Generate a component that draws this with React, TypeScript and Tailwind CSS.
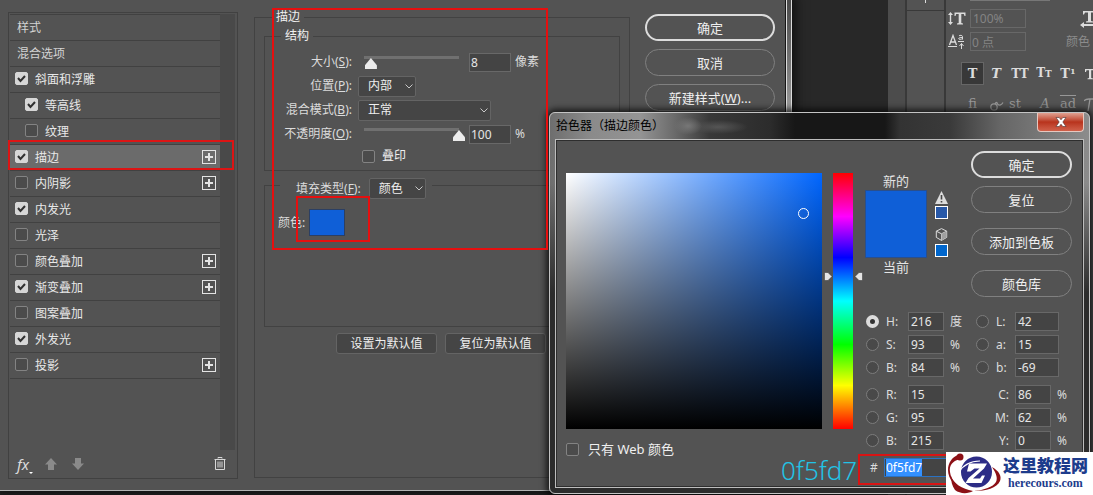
import React from "react";

const EFFECTS = [
  { name: "斜面和浮雕", checked: true },
  { name: "等高线", checked: true, sub: true },
  { name: "纹理", checked: false, sub: true },
  { name: "描边", checked: true, plus: true, active: true },
  { name: "内阴影", checked: false, plus: true },
  { name: "内发光", checked: true },
  { name: "光泽", checked: false },
  { name: "颜色叠加", checked: false, plus: true },
  { name: "渐变叠加", checked: true, plus: true },
  { name: "图案叠加", checked: false },
  { name: "外发光", checked: true },
  { name: "投影", checked: false, plus: true },
];

const TrashIcon = (props: React.SVGProps<SVGSVGElement>) => (
  <svg {...props} width="12" height="13" viewBox="0 0 12 13" fill="none" stroke="#d8d8d8">
    <path d="M4 1.5V.5h4v1M.5 2.5h11M1.500 3v9.500h9V3M4 4.500v6M6 4.500v6M8 4.500v6" />
  </svg>
);

const ArrowIcon = ({ down }: { down?: boolean }) => (
  <svg width="12" height="12" viewBox="0 0 12 12" fill="#8a8a8a" className={down ? "rotate-180" : ""}>
    <path d="M6 0l6 6.500H9V12H3V6.500H0z" />
  </svg>
);

const PlusIcon = () => (
  <svg width="14" height="14" viewBox="0 0 14 14" fill="none" stroke="#e4e4e4">
    <rect x=".5" y=".5" width="13" height="13" />
    <path d="M7 3v8M3 7h8" strokeWidth="2" />
  </svg>
);

const WarningIcon = () => (
  <svg width="13" height="13" viewBox="0 0 13 13">
    <path d="M6.500 0L13 13H0z" fill="#dcdcdc" />
    <path d="M6.500 4v4.500M6.500 10v1.500" stroke="#444" strokeWidth="1.600" />
  </svg>
);

const CubeIcon = () => (
  <svg width="13" height="13" viewBox="0 0 13 13" fill="none" stroke="#dcdcdc" strokeLinejoin="round">
    <path d="M6.500.6l5.200 2.600v6.200L6.500 12.400 1.300 9.400V3.200z" />
    <path d="M1.300 3.200l5.200 2.600 5.200-2.600M6.500 5.800v6.600" />
    <path d="M6.500 6l5-2.500v5.800l-5 2.900z" fill="#a0a0a0" stroke="none" />
  </svg>
);

const HeightIcon = () => (
  <svg width="18" height="16" viewBox="0 0 18 16" fill="#dcdcdc" className="shrink-0">
    <path d="M2.500 1L5 4H3.200v7H5l-2.500 3L0 11h1.800V4H0z" />
    <path d="M6.500 1.500H17.500V5H16.500L15.800 3H13.300V12L15 12.500V13.500H9V12.500L10.700 12V3H8.200L7.500 5H6.500z" />
  </svg>
);

const BaselineIcon = () => (
  <svg width="18" height="16" viewBox="0 0 18 16" fill="none" stroke="#dcdcdc" className="shrink-0">
    <path d="M1.500 11L5 1.500 8.500 11M2.800 8h4.500" strokeWidth="1.300" />
    <path d="M0 12.500h9M10 7.500h6M11 1.800c1-.8 3.500-.6 3.500.8v3M14.500 3.500c-2 0-4 .2-3.800 1.300.3 1 2.800.8 3.800-.5" />
    <path d="M13.500 15V9.500M11.500 12l2-2.500 2 2.500" />
  </svg>
);

const WidthIcon = () => (
  <svg width="20" height="18" viewBox="0 0 20 18" fill="#dcdcdc">
    <path d="M3 1H15V4.500H14L13.300 2.500H11V11L13 11.500V12.500H6V11.500L8 11V2.500H5L4 4.500H3z" />
    <path d="M0 15l4-3v2h14v2H4v2z" />
  </svg>
);

const SubscriptIcon = () => (
  <svg width="14" height="14" viewBox="0 0 14 14" fill="#dcdcdc">
    <path d="M0 2H10V5H9L8.500 3.200H6.200V11L8 11.500V12.300H2.500V11.500L4 11V3.200H1.500L1 5H0z" />
  </svg>
);

const SwashIcon = () => (
  <svg width="14" height="16" viewBox="0 0 14 16" fill="none" stroke="#979797" strokeWidth="1.300">
    <circle cx="4" cy="11" r="3.200" />
    <path d="M5 8c1-2 2-2 2.500 0 2 2 4 1 5.500-1.500" />
  </svg>
);

const TitlingIcon = () => (
  <svg width="14" height="16" viewBox="0 0 14 16" fill="none" stroke="#979797" strokeWidth="1.300">
    <path d="M0 5c1-2 3-2 5-2h7M6 3L4 15" />
  </svg>
);

const SiteLogo = () => (
  <svg width="57" height="43" viewBox="0 0 57 43" className="shrink-0">
    <path d="M14 7C6 9 3 14 4 20c1 8 7 14 14 18-9-3-16-11-16-20C2 11 6 5 12 3z" fill="#8c1016" />
    <path d="M5 24c2 7 11 13 22 15-5 3-13 3-18-1-3-4-4-9-4-14z" fill="#8c1016" />
    <circle cx="14" cy="5" r="3.500" fill="#8c1016" />
    <circle cx="30.500" cy="20" r="15.500" fill="#2c2c86" />
    <path d="M12 21c5-8 13-12 22-12" stroke="#fff" strokeWidth="1.200" fill="none" />
    <path d="M23 11.500h18l-3 5-11 10h7l2-3h3l-3.500 7.500H19.500l3-5 11-9.500h-5l-4 3h-3.500z" fill="#fff" />
    <path d="M46 15c7 4 10 9 8 14-3 7-14 10-26 10 10-1 19-4 22-9 2-4 0-9-4-15z" fill="#8c1016" />
  </svg>
);

const CHECK =
  "size-[13px] shrink-0 appearance-none rounded-[2px] border border-[#838383] bg-[#4b4b4b] checked:border-[#d6d6d6] checked:bg-[#d6d6d6]";
const FIELD = "h-[19px] border border-[#686868] bg-[#444] text-[#e6e6e6] outline-none";
const PILL = "h-[27px] rounded-full border border-[#808080] text-[13px] leading-5 text-[#efefef]";
const PILL_PRIMARY = "h-[27px] rounded-full border-2 border-[#dcdcdc] text-[13px] leading-5 text-[#efefef]";

function Check({ checked, id }: { checked: boolean; id: string }) {
  return (
    <span className="relative flex shrink-0">
      <input id={id} type="checkbox" defaultChecked={checked} className={"peer " + CHECK} />
      <svg
        className="pointer-events-none absolute inset-0 hidden peer-checked:block"
        width="13"
        height="13"
        viewBox="0 0 13 13"
        fill="none"
        stroke="#303030"
        strokeWidth="2"
      >
        <path d="M3 6l2.500 3L10 4" />
      </svg>
    </span>
  );
}

function Select({ id, value, width }: { id: string; value: string; width: string }) {
  return (
    <span className={"relative flex " + width}>
      <select
        id={id}
        className="h-[21px] w-full appearance-none rounded-[2px] border border-[#646464] bg-[#454545] pl-[9px] leading-4 text-[#efefef] outline-none"
      >
        <option>{value}</option>
      </select>
      <svg className="pointer-events-none absolute top-2 right-[3px]" width="8" height="5" viewBox="0 0 8 5" fill="none" stroke="#c8c8c8">
        <path d="M.5.5L4 4 7.500.5" />
      </svg>
    </span>
  );
}

function Slider({ id, value, max }: { id: string; value: number; max: number }) {
  return (
    <input
      id={id}
      type="range"
      min={0}
      max={max}
      defaultValue={value}
      className="mt-1 ml-1 h-[7px] w-[103px] appearance-none self-start bg-transparent outline-none [&::-webkit-slider-runnable-track]:h-[3px] [&::-webkit-slider-runnable-track]:bg-[linear-gradient(90deg,transparent_2px,#707070_2px,#707070_97px,transparent_97px)] [&::-webkit-slider-thumb]:mt-[2px] [&::-webkit-slider-thumb]:h-[11px] [&::-webkit-slider-thumb]:w-3 [&::-webkit-slider-thumb]:appearance-none [&::-webkit-slider-thumb]:bg-[#ececec] [&::-webkit-slider-thumb]:[clip-path:polygon(50%_0,100%_65%,100%_100%,0_100%,0_65%)]"
    />
  );
}

function Label({ htmlFor, text, hotkey }: { htmlFor: string; text: string; hotkey: string }) {
  return (
    <label htmlFor={htmlFor} className="whitespace-nowrap text-[#dcdcdc]">
      {text}(<u>{hotkey}</u>):
    </label>
  );
}

function Row({ children }: { children: React.ReactNode }) {
  return <div className="grid h-6 grid-cols-[87px_1fr] items-center gap-[6px] [&>label]:text-right">{children}</div>;
}

function EffectList() {
  return (
    <aside className="mt-3 ml-2 flex h-[467px] w-[230px] shrink-0 flex-col border border-[#414141] p-px pr-[2px]">
      <div className="flex flex-1">
        <ul className="flex-1 border-t border-[#414141] text-[#e8e8e8]">
          <li className="flex h-[26px] items-center border-b border-[#414141] pl-[7px] text-[#d4d4d4]">样式</li>
          <li className="flex h-[26px] items-center border-b border-[#414141] pl-[7px] text-[#d4d4d4]">混合选项</li>
          {EFFECTS.map((e) => (
            <li
              key={e.name}
              className={
                "flex h-[26px] items-center gap-[7px] border-b border-[#414141] pr-1 " +
                (e.sub ? "pl-[15px] " : "pl-[5px] ") +
                (e.active ? "bg-[#6b6b6b]" : "")
              }
            >
              <span className="pb-[3px]">
                <Check id={e.name} checked={e.checked} />
              </span>
              <label htmlFor={e.name} className="flex-1">
                {e.name}
              </label>
              {e.plus && (
                <button aria-label={"添加" + e.name} className="pb-px">
                  <PlusIcon />
                </button>
              )}
            </li>
          ))}
        </ul>
        <div className="w-[15px] bg-[#494949]" />
      </div>
      <div className="flex h-[27px] items-center pr-[9px] pl-[7px]">
        <button className="relative text-[15px] leading-5 text-[#dcdcdc] italic">
          fx
          <span className="absolute right-[-4px] bottom-0 border-x-2 border-t-2 border-x-transparent border-t-white" />
        </button>
        <button aria-label="上移" className="ml-4">
          <ArrowIcon />
        </button>
        <button aria-label="下移" className="ml-[15px]">
          <ArrowIcon down />
        </button>
        <button aria-label="删除" className="ml-auto">
          <TrashIcon />
        </button>
      </div>
    </aside>
  );
}

function StrokeSettings() {
  return (
    <fieldset className="mt-2 ml-4 h-[470px] w-[376px] shrink-0 border border-[#424242] px-[9px]">
      <legend className="ml-2 px-1 leading-[18px] text-[#efefef]">描边</legend>
      <fieldset className="mt-px border border-[#424242] pt-[5px] pb-1">
        <legend className="ml-4 px-1 leading-[18px] text-[#efefef]">结构</legend>
        <Row>
          <Label htmlFor="size" text="大小" hotkey="S" />
          <div className="flex h-6 items-center gap-1">
            <Slider id="size" value={8} max={250} />
            <input aria-label="大小" defaultValue="8" className={FIELD + " w-[42px] px-px"} />
            <span className="text-[#dcdcdc]">像素</span>
          </div>
        </Row>
        <Row>
          <Label htmlFor="position" text="位置" hotkey="P" />
          <Select id="position" value="内部" width="w-[58px]" />
        </Row>
        <Row>
          <Label htmlFor="mode" text="混合模式" hotkey="B" />
          <Select id="mode" value="正常" width="w-[133px]" />
        </Row>
        <Row>
          <Label htmlFor="opacity" text="不透明度" hotkey="O" />
          <div className="flex h-6 items-center gap-1">
            <Slider id="opacity" value={100} max={100} />
            <input aria-label="不透明度" defaultValue="100" className={FIELD + " w-[42px] px-px"} />
            <span className="text-[#dcdcdc]">%</span>
          </div>
        </Row>
        <div className="flex h-5 items-center gap-[7px] pl-[97px]">
          <Check id="overprint" checked={false} />
          <label htmlFor="overprint" className="text-[#efefef]">
            叠印
          </label>
        </div>
      </fieldset>

      <fieldset className="h-[156px] border border-[#424242]">
        <legend className="ml-[15px] pt-[7px] pr-[6px] pl-4">
          <div className="flex items-center gap-2">
            <Label htmlFor="fill" text="填充类型" hotkey="F" />
            <Select id="fill" value="颜色" width="w-[57px]" />
          </div>
        </legend>
        <div className="flex items-center pt-[10px] pl-[13px]">
          <label htmlFor="stroke-color" className="w-[31px] text-[#dcdcdc]">
            颜色:
          </label>
          <button id="stroke-color" aria-label="颜色" className="h-[27px] w-9 border border-[#2b3f63] bg-[#0f5fd7]" />
        </div>
      </fieldset>

      <div className="mt-[6px] flex gap-2 pl-[72px]">
        <button className="h-[21px] w-[101px] rounded-[3px] border border-[#646464] bg-[#454545] leading-4 text-[#efefef]">
          设置为默认值
        </button>
        <button className="h-[21px] w-[101px] rounded-[3px] border border-[#646464] bg-[#454545] leading-4 text-[#efefef]">
          复位为默认值
        </button>
      </div>
    </fieldset>
  );
}

function LayerStyleWindow() {
  return (
    <section className="absolute top-0 left-0 flex h-[491px] w-[792px] border-b border-[#b4b4b4] bg-[#535353] shadow-[0_0_10px_4px_#111]">
      <EffectList />
      <StrokeSettings />
      <div className="mt-[14px] ml-[15px] flex w-[130px] flex-col gap-2">
        <button className={PILL_PRIMARY}>确定</button>
        <button className={PILL}>取消</button>
        <button className={PILL}>
          新建样式(<u>W</u>)...
        </button>
      </div>
      <div className="ml-auto w-[6px] border-x border-[#dcdcdc] bg-linear-to-b from-[#4a4a4a] to-[#9a9a9a] to-[110px] outline outline-[#151515]" />
    </section>
  );
}

function CharacterPanel() {
  return (
    <div className="ml-auto flex w-[205px] bg-[#535353]">
      <div className="w-[17px] bg-[#4c4c4c]" />
      <div className="w-[41px] border-x-2 border-[#393939]">
        <div className="flex h-[11px] justify-center border-b border-[#393939]">
          <span className="h-[3px] w-px bg-[#dcdcdc]" />
        </div>
      </div>
      <div className="min-w-0 flex-1 overflow-hidden">
        <div className="ml-6 h-px w-20 bg-[#777]" />
        <div className="mt-2 flex items-center gap-1 pl-[2px]">
          <HeightIcon />
          <input
            aria-label="垂直缩放"
            defaultValue="100%"
            className="h-[19px] w-14 shrink-0 border border-[#686868] px-[2px] text-[#848484]"
          />
          <span className="ml-[50px] shrink-0">
            <WidthIcon />
          </span>
        </div>
        <div className="mt-1 flex items-center gap-1 pl-[2px]">
          <BaselineIcon />
          <input
            aria-label="基线偏移"
            defaultValue="0 点"
            className="h-[19px] w-14 shrink-0 border border-[#686868] px-px text-[#848484]"
          />
          <span className="ml-9 text-[#8c8c8c]">颜色</span>
        </div>
        <div className="mt-[11px] flex items-center pl-[15px] font-['DejaVu_Serif',serif] text-[13px] leading-5 font-bold text-[#dcdcdc]">
          <button className="h-[23px] w-[23px] shrink-0 border border-[#666] bg-[#383838]">T</button>
          <button className="w-6 shrink-0 italic">T</button>
          <button className="w-6 shrink-0 text-[12px]">TT</button>
          <button className="w-6 shrink-0 text-[12px]">
            T<span className="text-[9px]">T</span>
          </button>
          <button className="w-6 shrink-0">
            T<sup className="text-[8px]">1</sup>
          </button>
          <button aria-label="下标" className="ml-[5px] shrink-0">
            <SubscriptIcon />
          </button>
        </div>
        <div className="mt-[7px] flex items-center pl-[15px] font-['DejaVu_Serif',serif] text-[13px] leading-6 text-[#979797]">
          <button className="w-[23px] shrink-0">fi</button>
          <button aria-label="花饰字" className="ml-[6px] w-[18px] shrink-0">
            <SwashIcon />
          </button>
          <button className="w-[18px] shrink-0 pr-1">st</button>
          <button className="ml-[6px] w-[26px] shrink-0 italic">A</button>
          <button className="w-5 shrink-0 overline">ad</button>
          <button aria-label="标题替代字" className="ml-[6px] shrink-0">
            <TitlingIcon />
          </button>
        </div>
      </div>
    </div>
  );
}

type FieldProps = { label: string; value: string; unit?: string; checked?: boolean };

function LeftField({ label, value, unit, checked }: FieldProps) {
  return (
    <div className="flex h-[19px] items-center">
      <Radio label={label + value} checked={checked} />
      <span className="ml-[7px] w-[22px] text-[#dcdcdc]">{label}:</span>
      <input aria-label={label} defaultValue={value} className={FIELD + " w-9 px-[2px]"} />
      <span className="ml-[6px] text-[#dcdcdc]">{unit}</span>
    </div>
  );
}

function Radio({ label, checked }: { label: string; checked?: boolean }) {
  return (
    <input
      type="radio"
      name="channel"
      aria-label={label}
      defaultChecked={checked}
      className="size-[13px] shrink-0 appearance-none rounded-full border border-[#7c7c7c] bg-[#494949] checked:border-4 checked:border-[#dcdcdc] checked:bg-[#333]"
    />
  );
}

function LabField({ label, value }: FieldProps) {
  return (
    <div className="flex h-[19px] items-center">
      <Radio label={label + value} />
      <span className="ml-[7px] w-[19px] text-[#dcdcdc]">{label}:</span>
      <input aria-label={label} defaultValue={value} className={FIELD + " w-11 px-[2px]"} />
    </div>
  );
}

function CmykField({ label, value }: FieldProps) {
  return (
    <div className="flex h-[19px] items-center">
      <label htmlFor={"cmyk-" + label} className="w-[33px] text-right text-[#dcdcdc]">
        {label}:
      </label>
      <input id={"cmyk-" + label} defaultValue={value} className={FIELD + " ml-[6px] w-9 px-[2px]"} />
      <span className="ml-[6px] text-[#dcdcdc]">%</span>
    </div>
  );
}

function ColorPickerWindow() {
  return (
    <section className="absolute top-28 left-[549px] flex h-[382px] w-[541px] flex-col rounded-md border border-[#c4c4c4] bg-[linear-gradient(180deg,transparent_70px,#2c2c2c_180px),radial-gradient(14px_9px_at_138px_13px,#777,transparent),radial-gradient(30px_7px_at_168px_14px,#555,transparent),linear-gradient(90deg,#6e6e6e,#8a8a8a_40px,#949494_90px,#6a6a6a_125px,#383838_160px,#2c2c2c_220px,#171717_245px,#171717_335px,#333_350px,#3a3a3a_400px,#666_450px,#8c8c8c)] px-[5px] pb-[5px] shadow-[0_0_6px_3px_rgba(0,0,0,0.7)]">
      <header className="flex h-[26px] items-center">
        <h2 className="pl-px text-black">拾色器（描边颜色）</h2>
        <button
          aria-label="关闭"
          className="ml-auto flex h-[19px] w-[47px] items-center justify-center self-start rounded-b-[4px] border border-t-0 border-[#e6c8c0] bg-linear-to-b from-[#dfa091] via-[#b8331c] via-50% to-[#d0604a]"
        >
          <svg width="12" height="10" viewBox="0 0 12 10" stroke="#4a3030" strokeWidth=".6" fill="#fff">
            <path d="M1 .5h3.200L6 2.800 7.800.5H11L7.800 5 11 9.500H7.800L6 7.200 4.200 9.500H1L4.200 5z" />
          </svg>
        </button>
      </header>

      <div className="flex flex-1 border border-[#bdbdbd] bg-[#535353] pl-[10px] inset-shadow-[0_0_0_1px_#2e2e2e]">
        <div className="pt-[33px]">
          <div className="flex gap-[11px]">
            <div className="relative size-64 bg-[linear-gradient(to_top,#000,transparent),linear-gradient(to_right,#fff,#0066ff)]">
              <span className="absolute top-[35px] left-[232px] size-[11px] rounded-full border border-white" />
            </div>
            <div className="relative h-64 w-5 bg-[linear-gradient(180deg,#f00,#f0f_17%,#00f_33%,#0ff_50%,#0f0_67%,#ff0_83%,#f00)]">
              <svg className="absolute top-[99px] -left-[9px]" width="39" height="9" viewBox="0 0 39 9" fill="#e4e4e4" stroke="#333" strokeWidth=".5">
                <path d="M.5.5H4L8 4.500 4 8.500H.5zM38.500.5H35L31 4.500 35 8.500H38.500z" />
              </svg>
            </div>
          </div>
          <div className="mt-[14px] flex items-center gap-[9px]">
            <Check id="web-only" checked={false} />
            <label htmlFor="web-only" className="text-[13px] leading-[13px] text-[#efefef]">
              只有 Web 颜色
            </label>
          </div>
        </div>

        <div className="ml-3 flex-1">
          <div className="flex">
            <div className="w-[62px] pt-8 text-center text-[13px] leading-[18px] text-[#e4e4e4]">
              <div>新的</div>
              <div className="h-[68px] border border-[#2a4f8c] bg-[#0f5fd7]" />
              <div>当前</div>
            </div>
            <div className="ml-2 flex flex-col pt-[51px]">
              <WarningIcon />
              <button aria-label="溢色替换" className="mt-[2px] size-[13px] border border-white bg-[#2758a8]" />
              <span className="mt-[9px]">
                <CubeIcon />
              </span>
              <button aria-label="Web 安全色" className="mt-[3px] size-[13px] border border-white bg-[#0066cc]" />
            </div>
            <div className="mt-[11px] ml-[23px] flex w-[101px] flex-col">
              <button className={PILL_PRIMARY}>确定</button>
              <button className={PILL + " mt-2"}>复位</button>
              <button className={PILL + " mt-[15px]"}>添加到色板</button>
              <button className={PILL + " mt-[15px]"}>颜色库</button>
            </div>
          </div>

          <div className="mt-[15px] flex pl-px">
            <div className="flex w-[110px] flex-col gap-1">
              <LeftField label="H" value="216" unit="度" checked />
              <LeftField label="S" value="93" unit="%" />
              <LeftField label="B" value="84" unit="%" />
              <div className="mt-1 flex flex-col gap-1">
                <LeftField label="R" value="15" />
                <LeftField label="G" value="95" />
                <LeftField label="B" value="215" />
              </div>
              <div className="mt-1 flex h-[19px] items-center pl-1">
                <label htmlFor="hex" className="w-[14px] text-[#dcdcdc]">
                  #
                </label>
                <input
                  id="hex"
                  defaultValue="0f5fd7"
                  autoFocus
                  onFocus={(e) => e.target.select()}
                  className="h-[19px] w-[75px] border border-[#2a72c4] bg-[#444] px-px text-[#e6e6e6] outline-none selection:bg-[#3390ff] selection:text-white"
                />
              </div>
            </div>
            <div className="flex flex-col gap-1">
              <LabField label="L" value="42" />
              <LabField label="a" value="15" />
              <LabField label="b" value="-69" />
              <div className="mt-1 flex flex-col gap-1">
                <CmykField label="C" value="86" />
                <CmykField label="M" value="62" />
                <CmykField label="Y" value="0" />
              </div>
            </div>
          </div>
        </div>
      </div>
    </section>
  );
}

function Annotations() {
  return (
    <div className="pointer-events-none absolute inset-0">
      <div className="absolute top-[140px] left-2 h-[30px] w-[226px] border-2 border-[#dc1414]" />
      <div className="absolute top-2 left-[272px] h-[242px] w-[276px] border-2 border-[#e60f0f]" />
      <div className="absolute top-[196px] left-[296px] h-[46px] w-[74px] border-2 border-[#e60f0f]" />
      <div className="absolute top-[454px] left-[858px] h-[31px] w-[120px] border-2 border-[#d81414]" />
      <div className="absolute top-[454px] left-[781px] text-[26px] leading-8 font-light text-[#22c3e6]">0f5fd7</div>
    </div>
  );
}

function Watermark() {
  return (
    <div className="absolute right-0 bottom-0 flex h-[43px] w-[147px] bg-white">
      <SiteLogo />
      <div className="flex flex-col text-center whitespace-nowrap text-[#1d3c8c]">
        <div className="pt-1 text-[17px] leading-[19px] font-black">这里教程网</div>
        <div className="font-['Liberation_Serif',serif] text-[12px] leading-4 font-bold">herecours.com</div>
      </div>
    </div>
  );
}

export default function App() {
  return (
    <main className="relative flex h-screen min-h-[495px] overflow-hidden bg-[#282828] font-['Noto_Sans','Noto_Sans_CJK_SC',sans-serif] text-[12px] leading-4">
      <CharacterPanel />
      <LayerStyleWindow />
      <ColorPickerWindow />
      <Annotations />
      <Watermark />
    </main>
  );
}
